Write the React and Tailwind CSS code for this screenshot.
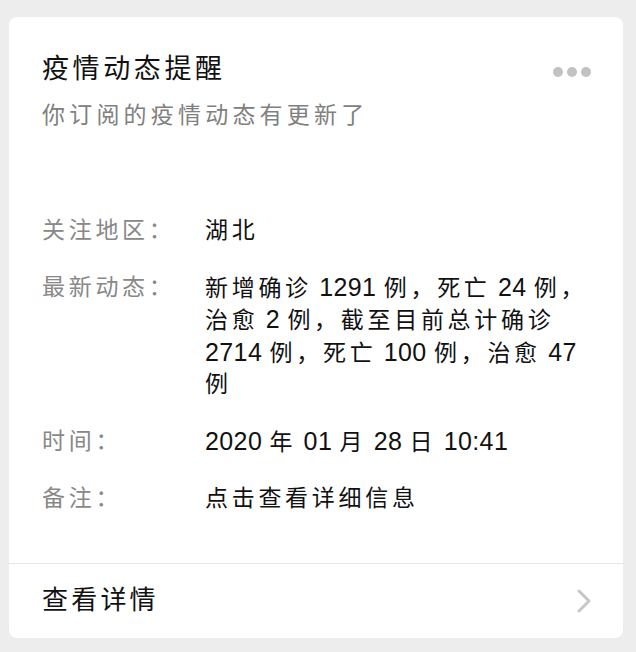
function Mixed({ text }) {
  const parts = text.split(/([\u3000-\u303f\u4e00-\u9fff\uff00-\uffef]+)/).filter((p) => p.length);
  return (
    <>
      {parts.map((p, i) =>
        /[\u3000-\u303f\u4e00-\u9fff\uff00-\uffef]/.test(p) ? (
          <span key={i} className="tracking-[3.7px]">{p}</span>
        ) : (
          <span key={i} className="text-[25px] tracking-[0.4px]">{p}</span>
        )
      )}
    </>
  );
}

export default function App() {
  const font = { fontFamily: '"Liberation Sans", "Noto Sans CJK SC", sans-serif' };
  return (
    <div className="w-[636px] h-[652px] bg-[#ededed] pt-[17px] pl-[9px]" style={font}>
      <div className="w-[614px] h-[621px] bg-white rounded-[8px] flex flex-col">
        <div className="flex-1 pl-[33px] pr-[32px] pt-[35px]">
          <div className="flex items-start justify-between">
            <div className="text-[27px] leading-[34px] text-[#111] tracking-[3.6px]">疫情动态提醒</div>
            <div className="flex gap-[4px] mt-[15px]">
              <span className="w-[10px] h-[10px] rounded-full bg-[#c2c2c2]" />
              <span className="w-[10px] h-[10px] rounded-full bg-[#c2c2c2]" />
              <span className="w-[10px] h-[10px] rounded-full bg-[#c2c2c2]" />
            </div>
          </div>
          <div className="mt-[13px] text-[23px] leading-[32px] text-[#808080] tracking-[4.2px]">你订阅的疫情动态有更新了</div>
          <div className="mt-[84px] flex flex-col gap-[25px] text-[23px] leading-[31.5px]">
            <div className="flex">
              <div className="w-[163px] shrink-0 text-[#888] tracking-[3.7px]">关注地区：</div>
              <div className="text-[#111]"><Mixed text="湖北" /></div>
            </div>
            <div className="flex">
              <div className="w-[163px] shrink-0 text-[#888] tracking-[3.7px]">最新动态：</div>
              <div className="text-[#111] whitespace-nowrap">
                <div><Mixed text="新增确诊 1291 例，死亡 24 例，" /></div>
                <div><Mixed text="治愈 2 例，截至目前总计确诊" /></div>
                <div><Mixed text="2714 例，死亡 100 例，治愈 47" /></div>
                <div><Mixed text="例" /></div>
              </div>
            </div>
            <div className="flex">
              <div className="w-[163px] shrink-0 text-[#888] tracking-[3.7px]">时间：</div>
              <div className="text-[#111] whitespace-nowrap"><Mixed text="2020 年 01 月 28 日 10:41" /></div>
            </div>
            <div className="flex">
              <div className="w-[163px] shrink-0 text-[#888] tracking-[3.7px]">备注：</div>
              <div className="text-[#111]"><Mixed text="点击查看详细信息" /></div>
            </div>
          </div>
        </div>
        <div className="h-[75px] border-t border-[#e6e6e6] flex items-center justify-between pl-[33px] pr-[31px]">
          <div className="text-[26px] text-[#111] tracking-[3.2px] -mt-[2px]">查看详情</div>
          <svg width="16" height="24" viewBox="0 0 16 24" fill="none">
            <path d="M3 2 L13 12 L3 22" stroke="#c7c7c7" strokeWidth="3" strokeLinecap="round" strokeLinejoin="round" />
          </svg>
        </div>
      </div>
    </div>
  );
}
